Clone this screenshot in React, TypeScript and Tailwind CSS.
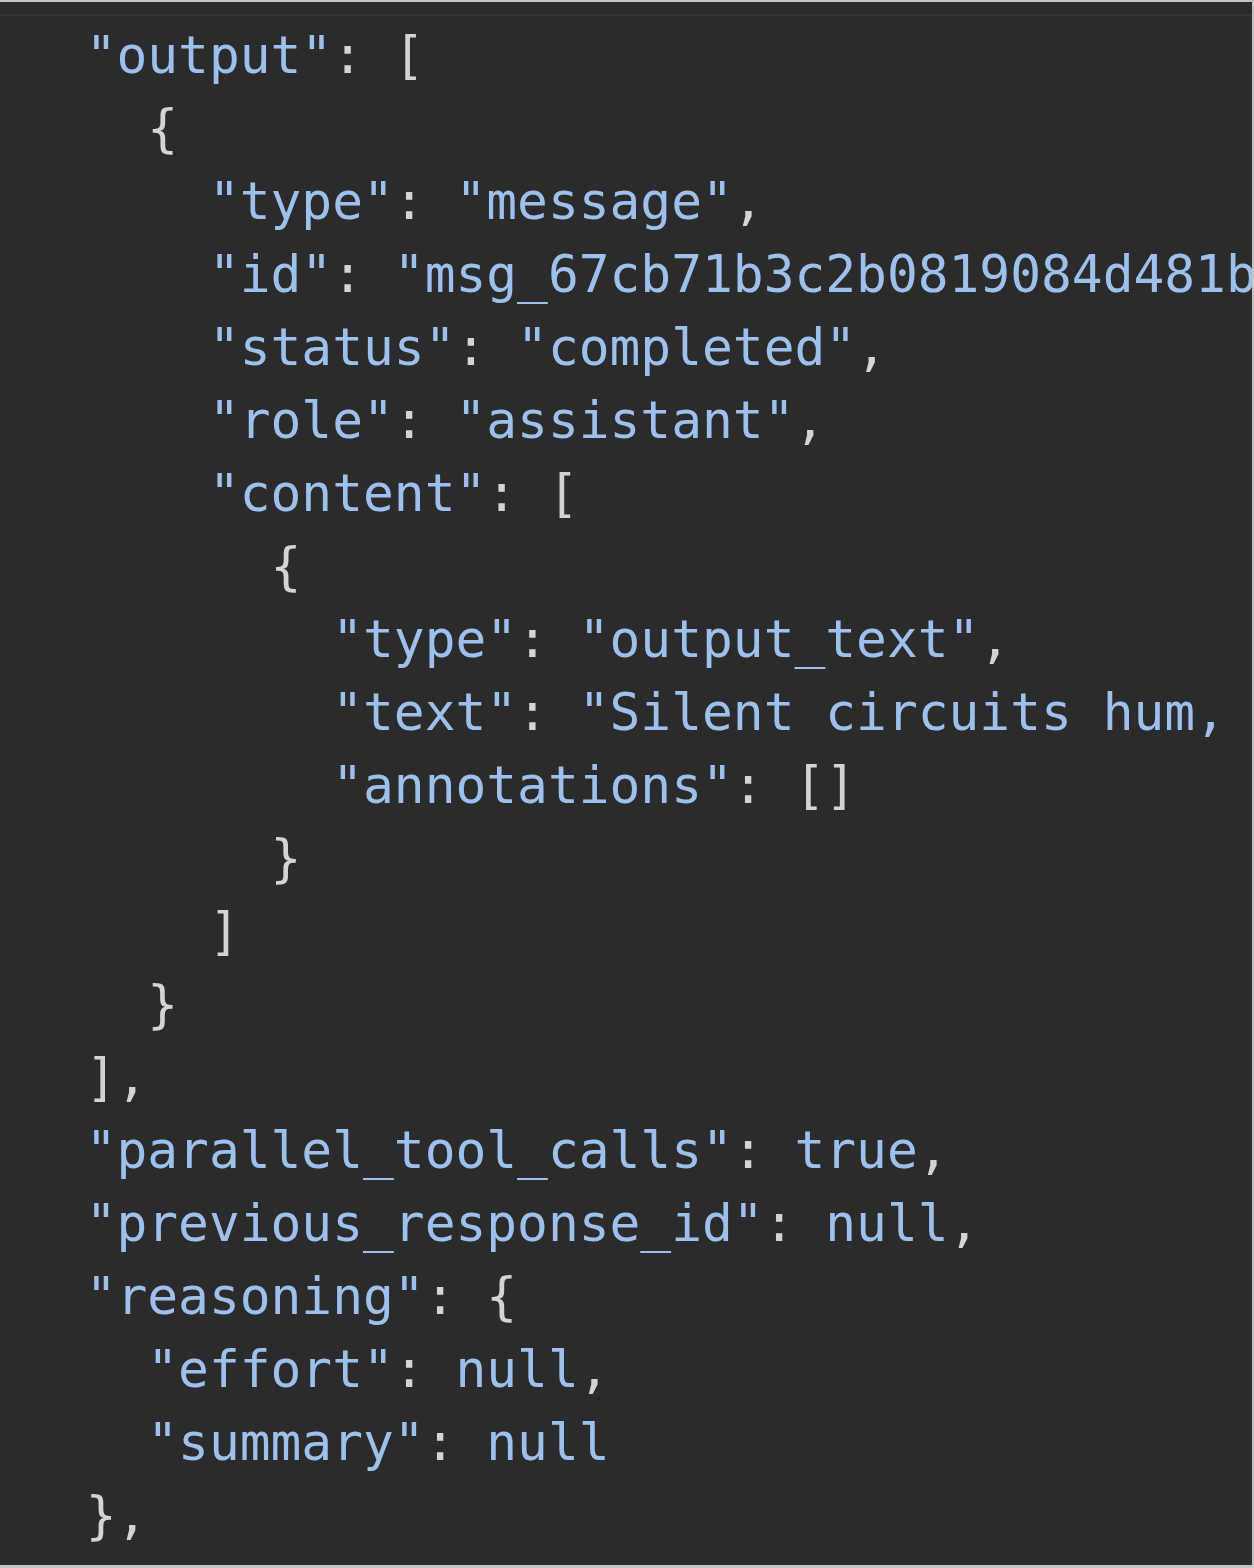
const lines = [
  '  "output": [',
  '    {',
  '      "type": "message",',
  '      "id": "msg_67cb71b3c2b0819084d481b',
  '      "status": "completed",',
  '      "role": "assistant",',
  '      "content": [',
  '        {',
  '          "type": "output_text",',
  '          "text": "Silent circuits hum,',
  '          "annotations": []',
  '        }',
  '      ]',
  '    }',
  '  ],',
  '  "parallel_tool_calls": true,',
  '  "previous_response_id": null,',
  '  "reasoning": {',
  '    "effort": null,',
  '    "summary": null',
  '  },',
];

const Line = ({ text }: { text: string }) => {
  const parts = text.split(/("[^"]*"?|true|false|null)/);
  return (
    <div className="h-[73px] leading-[73px] whitespace-pre">
      {parts.map((p, i) =>
        i % 2 === 1 ? (
          <span key={i} className="text-[#9dc1ec]">{p}</span>
        ) : (
          <span key={i} className="text-[#d4d4d4]">{p}</span>
        )
      )}
    </div>
  );
};

export default function App() {
  return (
    <div className="w-[1254px] h-[1568px] overflow-hidden bg-[#2b2b2b] border-t-2 border-r-2 border-b-[3px] border-t-[#c4c4c4] border-r-[#c4c4c4] border-b-[#c4c4c4] flex flex-col">
      <div className="h-[12px] bg-[#2a2a2a]" />
      <div className="h-[2px] bg-[#353535]" />
      <div className="flex-1 overflow-hidden pl-[24px] pt-[3px] text-[51.2px] font-['DejaVu_Sans_Mono',monospace]">
        {lines.map((l, i) => (
          <Line key={i} text={l} />
        ))}
      </div>
    </div>
  );
}
